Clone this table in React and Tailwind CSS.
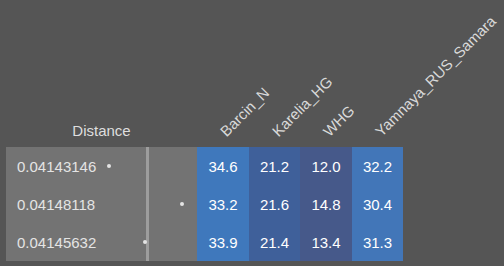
import React from "react";

// Rijen met afstand, positie van de stip en percentages per bronpopulatie
const rows = [
  { distance: "0.04143146", dot: 103, values: ["34.6", "21.2", "12.0", "32.2"] },
  { distance: "0.04148118", dot: 176, values: ["33.2", "21.6", "14.8", "30.4"] },
  { distance: "0.04145632", dot: 139, values: ["33.9", "21.4", "13.4", "31.3"] },
];

const columns = [
  { name: "Barcin_N", width: "w-[52px]", color: "bg-[#3f78bc]" },
  { name: "Karelia_HG", width: "w-[51px]", color: "bg-[#3f609a]" },
  { name: "WHG", width: "w-[52px]", color: "bg-[#46598a]" },
  { name: "Yamnaya_RUS_Samara", width: "w-[51px]", color: "bg-[#4276b8]" },
];

export default function App() {
  return (
    <div
      className="h-[266px] w-[504px] overflow-hidden bg-[#555555] pl-[6px] text-[15px]"
      style={{ fontFamily: '"Liberation Sans", Arial, sans-serif' }}
    >
      {/* Koprij met schuine labels */}
      <div className="flex h-[147px] items-end">
        <div className="w-[191px] pb-[8px] text-center leading-[17px] text-[#dedede]">
          Distance
        </div>
        {columns.map((col) => (
          <div key={col.name} className={`${col.width} flex h-full flex-col justify-end pb-[8px] pl-[31px]`}>
            <span className="block w-0 origin-bottom-left -rotate-45 whitespace-nowrap leading-[15px] text-[#d9d9d9]">
              {col.name}
            </span>
          </div>
        ))}
      </div>

      {/* Tabel */}
      <div className="flex w-[397px] flex-col">
        {rows.map((row, i) => (
          <div key={i} className="relative flex h-[38px]">
            <div className="flex w-[140px] items-center bg-[#737373] pl-[11px] leading-[17px] text-[#e4e4e4]">
              {row.distance}
            </div>
            <div className="w-[3px] bg-[#9d9d9d]" />
            <div className="w-[48px] bg-[#737373]" />
            {columns.map((col, j) => (
              <div
                key={col.name}
                className={`${col.width} ${col.color} flex items-center justify-center leading-[17px] text-white`}
              >
                {row.values[j]}
              </div>
            ))}
            {/* stip */}
            <div
              className="absolute top-[17px] h-[4px] w-[4px] rounded-full bg-[#e4e4e4]"
              style={{ left: row.dot - 2 }}
            />
          </div>
        ))}
      </div>
    </div>
  );
}
